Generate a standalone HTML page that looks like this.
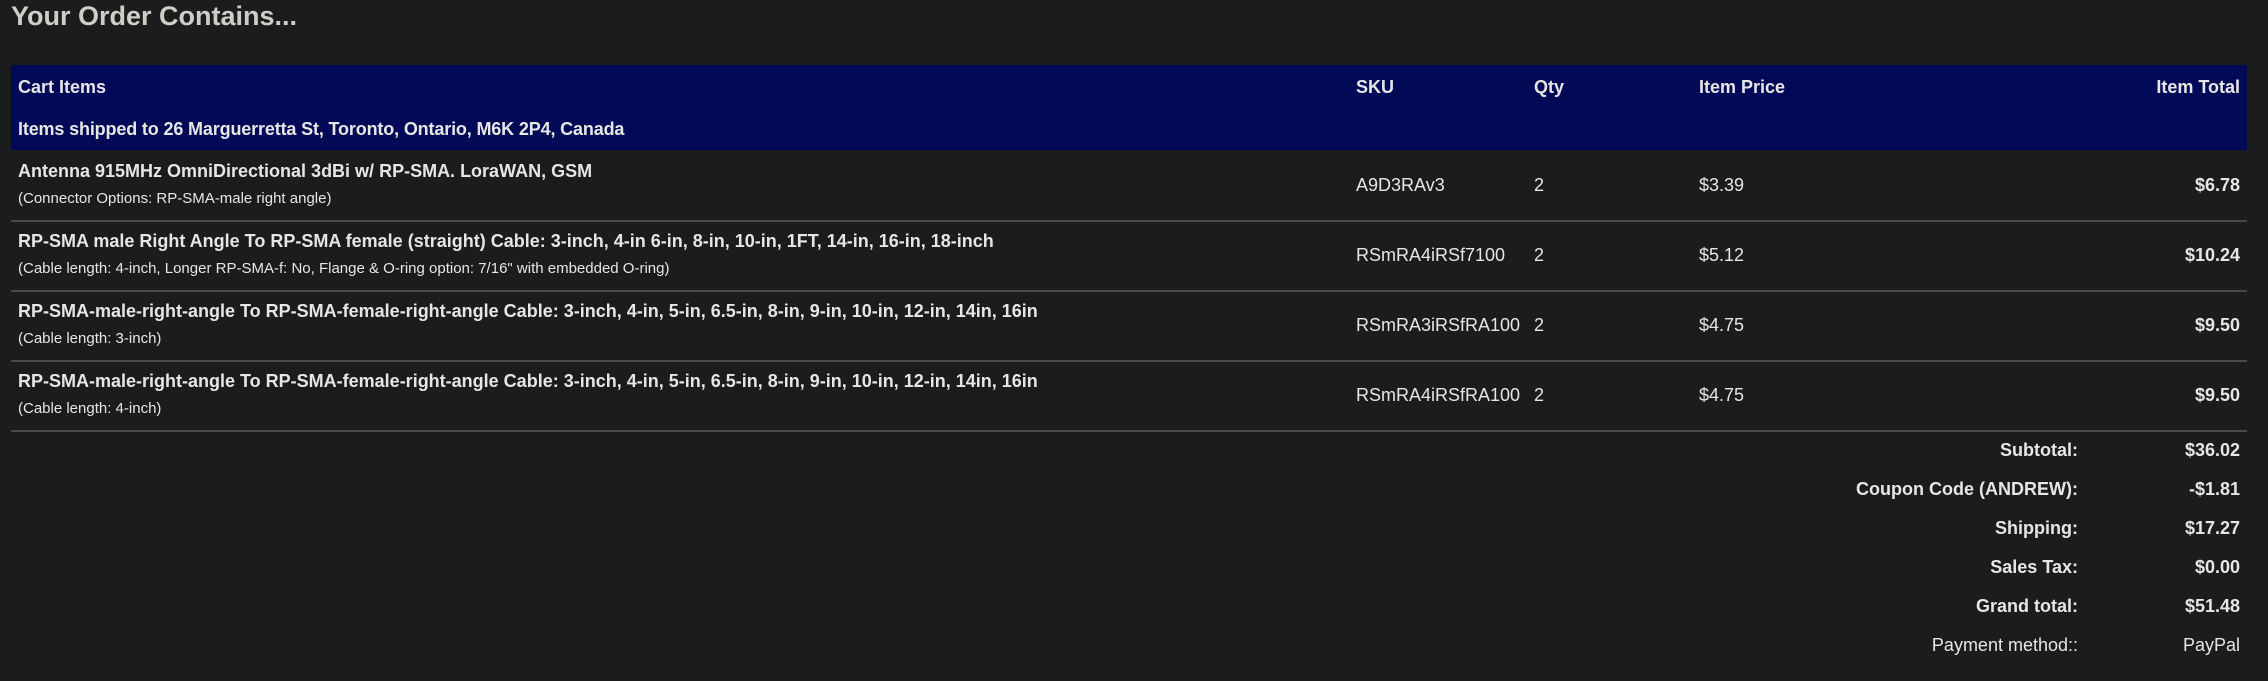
<!DOCTYPE html>
<html><head><meta charset="utf-8"><style>
body{margin:0;width:2268px;height:681px;background:#1b1c1e;color:#e8e6e3;font-family:"Liberation Sans",Arial,sans-serif;position:relative;overflow:hidden}
div{position:absolute;white-space:nowrap}
.t{font-size:27px;font-weight:bold;color:#d0ccc6;left:11px;top:1px}
.hdr{left:11px;top:65px;width:2236px;height:85px;background:#020a58}
.b{font-weight:bold;font-size:18px}
.n{font-size:18px}
.s{font-size:15px}
.line{left:11px;width:2236px;height:1.5px;background:#47494c}
.r{text-align:right}
</style></head><body>
<div class="t">Your Order Contains...</div>
<div class="hdr"></div>
<div class="b" style="left:18px;top:77px">Cart Items</div>
<div class="b" style="left:1356px;top:77px">SKU</div>
<div class="b" style="left:1534px;top:77px">Qty</div>
<div class="b" style="left:1699px;top:77px">Item Price</div>
<div class="b r" style="right:28px;top:77px">Item Total</div>
<div class="b" style="left:18px;top:119px;letter-spacing:-0.15px">Items shipped to 26 Marguerretta St, Toronto, Ontario, M6K 2P4, Canada</div>

<div class="b" style="left:18px;top:161px">Antenna 915MHz OmniDirectional 3dBi w/ RP-SMA. LoraWAN, GSM</div>
<div class="s" style="left:18px;top:190px">(Connector Options: RP-SMA-male right angle)</div>
<div class="n" style="left:1356px;top:175px">A9D3RAv3</div>
<div class="n" style="left:1534px;top:175px">2</div>
<div class="n" style="left:1699px;top:175px">$3.39</div>
<div class="b r" style="right:28px;top:175px">$6.78</div>
<div class="line" style="top:220px"></div>

<div class="b" style="left:18px;top:231px">RP-SMA male Right Angle To RP-SMA female (straight) Cable: 3-inch, 4-in 6-in, 8-in, 10-in, 1FT, 14-in, 16-in, 18-inch</div>
<div class="s" style="left:18px;top:260px">(Cable length: 4-inch, Longer RP-SMA-f: No, Flange &amp; O-ring option: 7/16" with embedded O-ring)</div>
<div class="n" style="left:1356px;top:245px">RSmRA4iRSf7100</div>
<div class="n" style="left:1534px;top:245px">2</div>
<div class="n" style="left:1699px;top:245px">$5.12</div>
<div class="b r" style="right:28px;top:245px">$10.24</div>
<div class="line" style="top:290px"></div>

<div class="b" style="left:18px;top:301px">RP-SMA-male-right-angle To RP-SMA-female-right-angle Cable: 3-inch, 4-in, 5-in, 6.5-in, 8-in, 9-in, 10-in, 12-in, 14in, 16in</div>
<div class="s" style="left:18px;top:330px">(Cable length: 3-inch)</div>
<div class="n" style="left:1356px;top:315px">RSmRA3iRSfRA100</div>
<div class="n" style="left:1534px;top:315px">2</div>
<div class="n" style="left:1699px;top:315px">$4.75</div>
<div class="b r" style="right:28px;top:315px">$9.50</div>
<div class="line" style="top:360px"></div>

<div class="b" style="left:18px;top:371px">RP-SMA-male-right-angle To RP-SMA-female-right-angle Cable: 3-inch, 4-in, 5-in, 6.5-in, 8-in, 9-in, 10-in, 12-in, 14in, 16in</div>
<div class="s" style="left:18px;top:400px">(Cable length: 4-inch)</div>
<div class="n" style="left:1356px;top:385px">RSmRA4iRSfRA100</div>
<div class="n" style="left:1534px;top:385px">2</div>
<div class="n" style="left:1699px;top:385px">$4.75</div>
<div class="b r" style="right:28px;top:385px">$9.50</div>
<div class="line" style="top:430px"></div>

<div class="b r" style="right:190px;top:440px">Subtotal:</div>
<div class="b r" style="right:28px;top:440px">$36.02</div>
<div class="b r" style="right:190px;top:479px">Coupon Code (ANDREW):</div>
<div class="b r" style="right:28px;top:479px">-$1.81</div>
<div class="b r" style="right:190px;top:518px">Shipping:</div>
<div class="b r" style="right:28px;top:518px">$17.27</div>
<div class="b r" style="right:190px;top:557px">Sales Tax:</div>
<div class="b r" style="right:28px;top:557px">$0.00</div>
<div class="b r" style="right:190px;top:596px">Grand total:</div>
<div class="b r" style="right:28px;top:596px">$51.48</div>
<div class="n r" style="right:190px;top:635px">Payment method::</div>
<div class="n r" style="right:28px;top:635px">PayPal</div>
</body></html>
